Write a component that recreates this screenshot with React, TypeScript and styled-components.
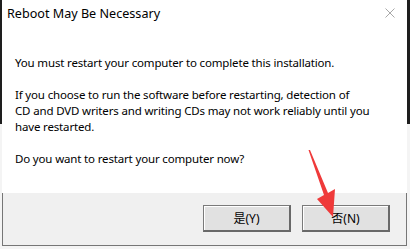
import styled, { createGlobalStyle } from 'styled-components';

const GlobalStyle = createGlobalStyle`
  html, body {
    margin: 0;
    padding: 0;
    background: linear-gradient(#1e1e1e 0, #1e1e1e 124px, #f4f4f4 124px);
    font-family: "Noto Sans", "Noto Sans CJK SC", sans-serif;
  }
  #root {
    width: 410px;
    height: 249px;
  }
`;

const Stage = styled.div`
  position: relative;
  width: 410px;
  height: 249px;
  overflow: hidden;
`;

const Window = styled.div`
  margin-left: 2px;
  width: 405px;
  display: flex;
  flex-direction: column;
  background: #fff;
`;

const TitleBar = styled.div`
  height: 26px;
  display: flex;
  align-items: center;
  justify-content: space-between;
  padding: 0 12px 0 5px;
`;

const Title = styled.div`
  font-size: 12.6px;
  color: #000;
`;

const CloseIcon = styled.svg`
  width: 10px;
  height: 10px;
  display: block;
`;

const Content = styled.div`
  padding: 29px 14px 26px 13px;
  font-size: 11.5px;
  line-height: 16px;
  color: #000;
  letter-spacing: -0.16px;
`;

const Paragraph = styled.p`
  margin: 0 0 16px;
  &:last-child {
    margin-bottom: 0;
  }
`;

const Footer = styled.div`
  height: 53px;
  background: #f0f0f0;
  border: 1px solid #767676;
  border-top: none;
  box-sizing: border-box;
  display: flex;
  justify-content: flex-end;
  align-items: flex-start;
  gap: 11px;
  padding: 12px 16px 0 0;
`;

const Button = styled.button`
  width: 88px;
  height: 27px;
  box-sizing: border-box;
  background: #e1e1e1;
  border: 1px solid #7a7a7a;
  border-right-width: 2px;
  border-bottom-width: 2px;
  border-right-color: #696969;
  border-bottom-color: #696969;
  box-shadow: inset 1px 1px 0 #ffffff;
  font-family: "Noto Sans", "Noto Sans CJK SC", sans-serif;
  font-size: 12px;
  color: #000;
  padding: 0;
  display: flex;
  align-items: center;
  justify-content: center;
`;

const Arrow = styled.svg`
  position: absolute;
  left: 0;
  top: 0;
  width: 410px;
  height: 249px;
  pointer-events: none;
`;

export default function App() {
  return (
    <>
      <GlobalStyle />
      <Stage>
        <Window>
          <TitleBar>
            <Title>Reboot May Be Necessary</Title>
            <CloseIcon viewBox="0 0 10 10">
              <path d="M0.5 0.5 L9.5 9.5 M9.5 0.5 L0.5 9.5" stroke="#a8a8a8" strokeWidth="1" fill="none" />
            </CloseIcon>
          </TitleBar>
          <Content>
            <Paragraph>You must restart your computer to complete this installation.</Paragraph>
            <Paragraph>
              If you choose to run the software before restarting, detection of
              <br />
              CD and DVD writers and writing CDs may not work reliably until you
              <br />
              have restarted.
            </Paragraph>
            <Paragraph>Do you want to restart your computer now?</Paragraph>
          </Content>
          <Footer>
            <Button>是(Y)</Button>
            <Button>否(N)</Button>
          </Footer>
        </Window>
        <Arrow viewBox="0 0 410 249">
          <polygon points="308.5,150 310,150 328,193 335,189 333,217 317,199 324,195" fill="#ef3a3a" />
        </Arrow>
      </Stage>
    </>
  );
}
